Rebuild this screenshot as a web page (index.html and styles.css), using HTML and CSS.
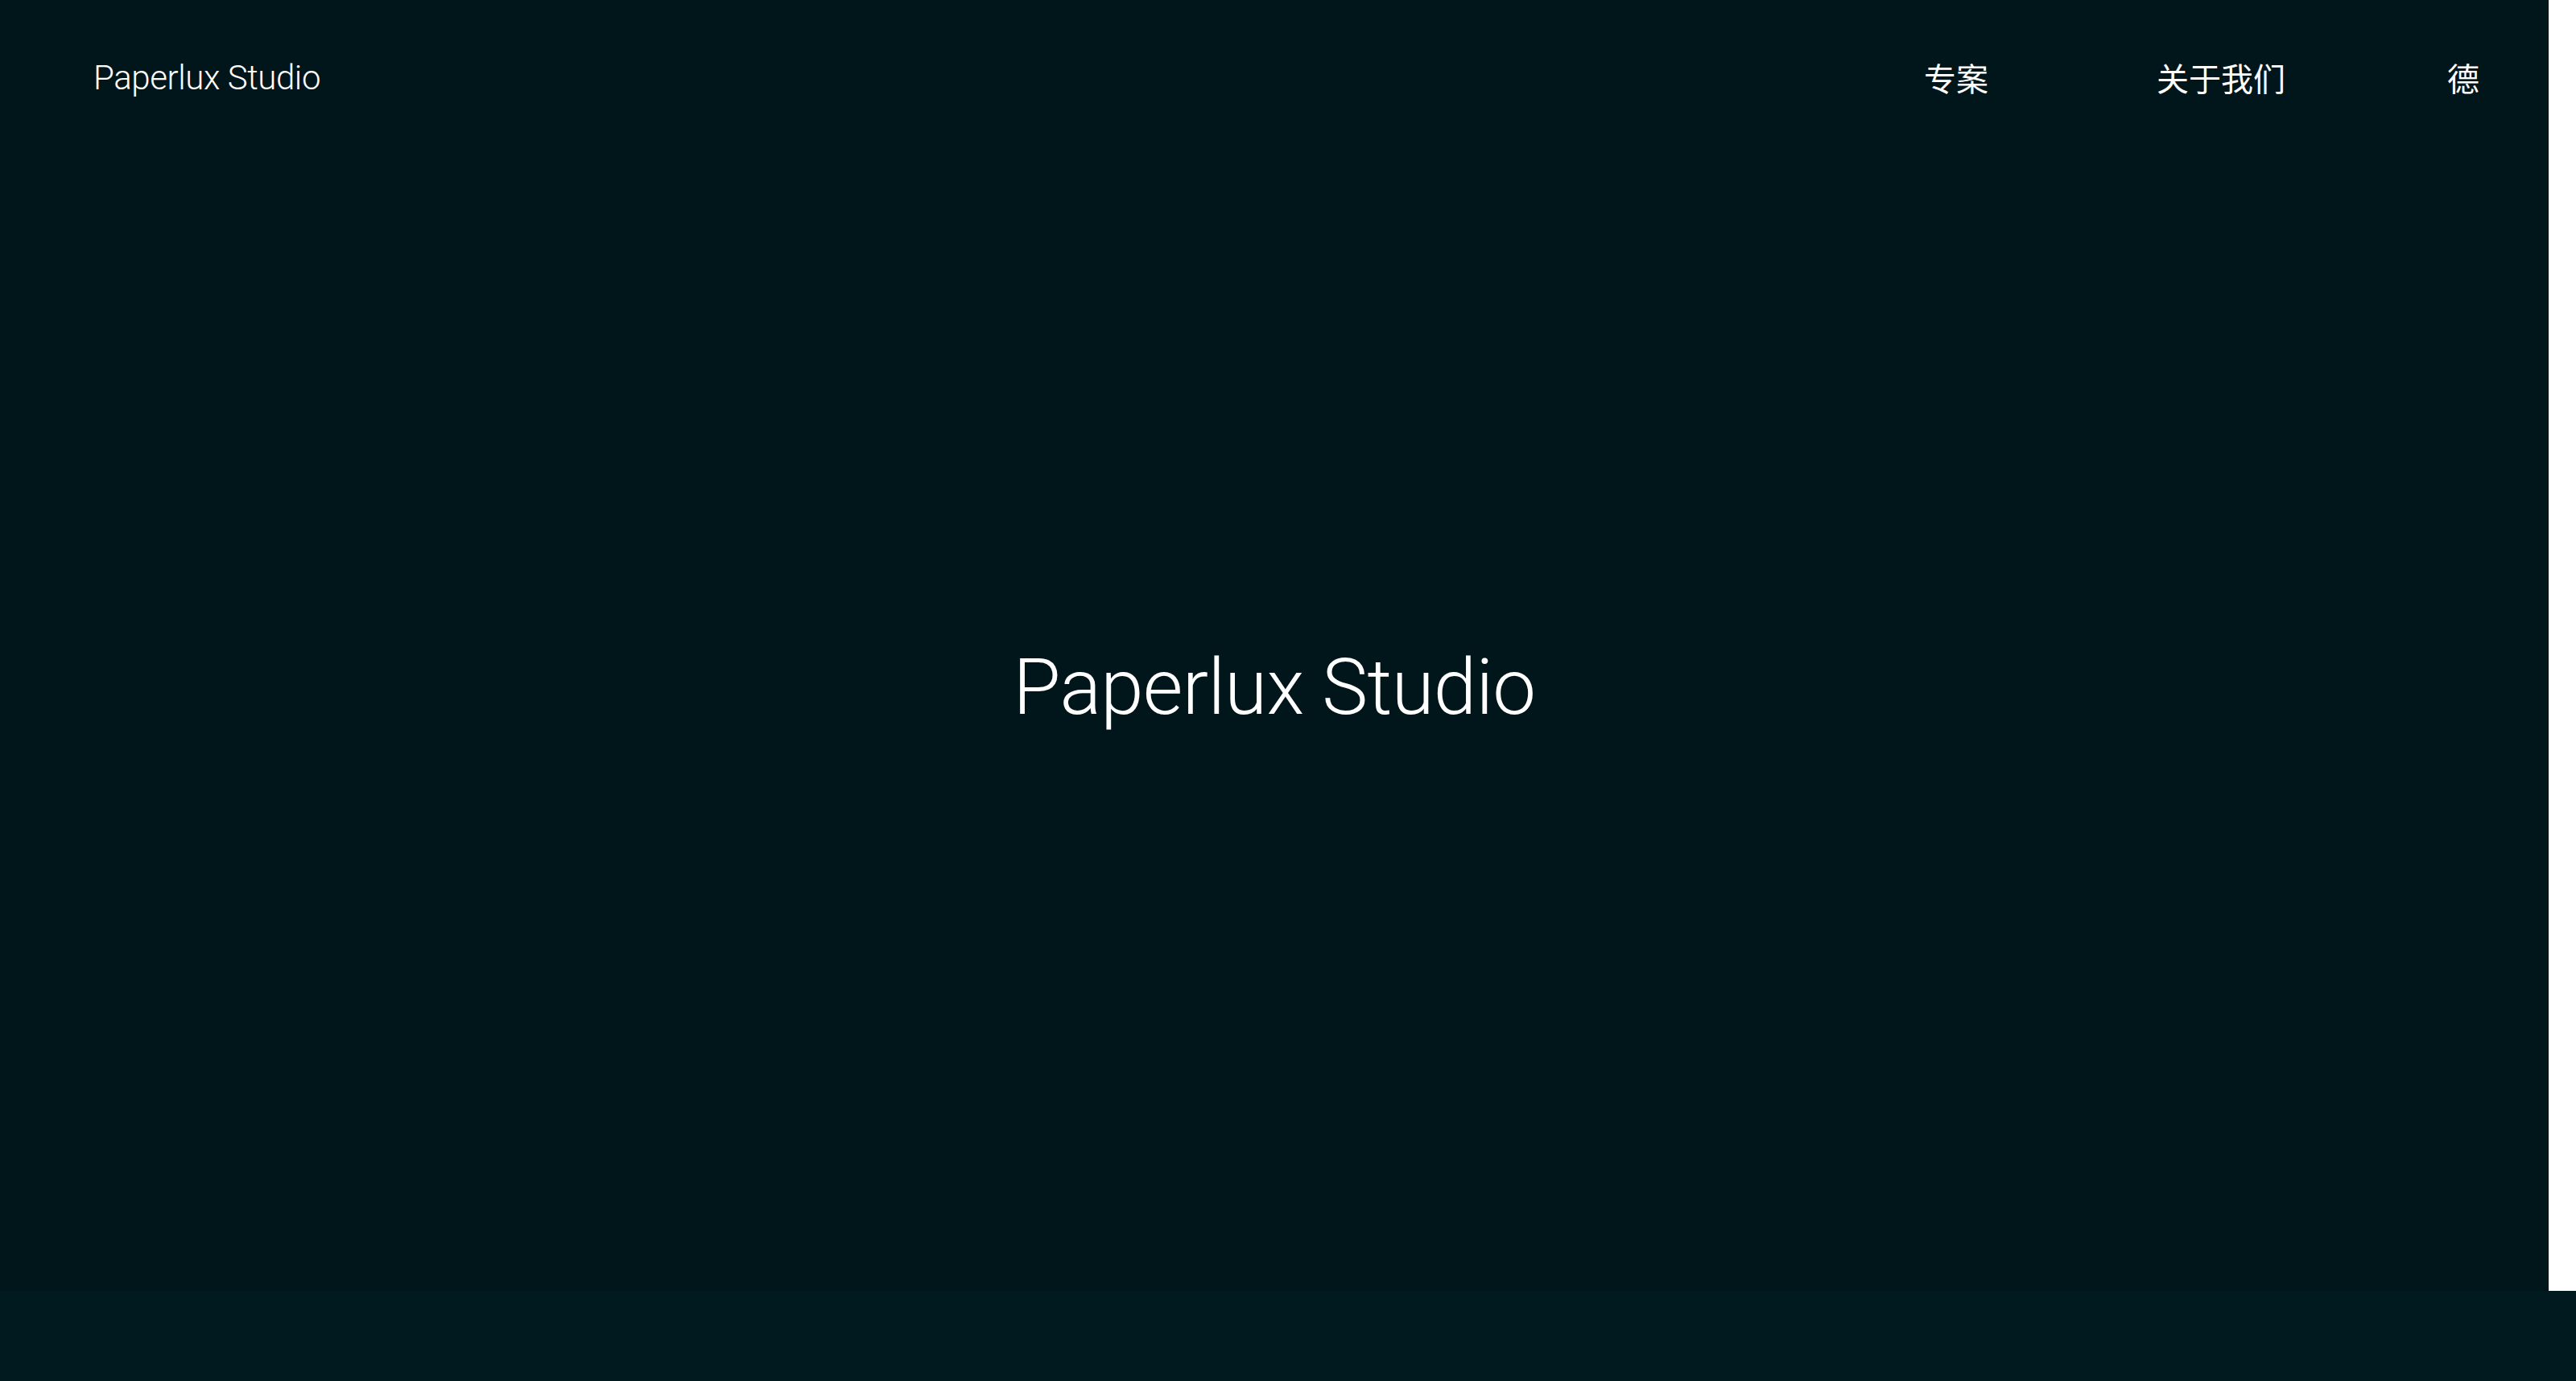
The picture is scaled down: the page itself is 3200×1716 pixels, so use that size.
FILE: index.html
```html
<!DOCTYPE html>
<html lang="zh">
<head>
<meta charset="utf-8">
<title>Paperlux Studio</title>
<link rel="stylesheet" href="styles.css">
</head>
<body>
<div class="page">
  <section class="hero">
    <header class="header">
      <a class="logo" href="#">Paperlux Studio</a>
      <nav class="nav">
        <a class="nav-item nav-item-first" href="#">专案</a>
        <a class="nav-item" href="#">关于我们</a>
        <a class="nav-item" href="#">德</a>
      </nav>
    </header>
    <main class="stage">
      <h1 class="title">Paperlux Studio</h1>
    </main>
  </section>
  <aside class="side"></aside>
</div>
<div class="band"></div>
</body>
</html>
```

FILE: styles.css
```css
html, body {
  margin: 0;
  padding: 0;
}
body {
  background: #001a1f;
  font-family: Roboto, "Noto Sans CJK SC", sans-serif;
  color: #ffffff;
}
a {
  color: inherit;
  text-decoration: none;
}
.page {
  display: flex;
  height: 1604px;
}
.hero {
  width: 3166px;
  flex: none;
  background: #01161b;
  display: flex;
  flex-direction: column;
}
.side {
  flex: 1;
  background: #ffffff;
}
.header {
  display: flex;
  justify-content: space-between;
  align-items: center;
  padding: 72px 86px 0 116px;
  height: 50px;
}
.logo {
  font-size: 42px;
  font-weight: 300;
  line-height: 50px;
  letter-spacing: -0.01em;
}
.nav {
  display: flex;
  gap: 201px;
  margin-top: -3px;
}
.nav-item {
  font-family: "Noto Sans CJK SC", sans-serif;
  font-size: 40px;
  line-height: 50px;
}
.nav-item-first {
  margin-right: 8px;
}
.stage {
  flex: 1;
  display: flex;
  align-items: center;
  justify-content: center;
  padding-bottom: 18px;
}
.title {
  margin: 0;
  font-weight: 300;
  font-size: 96px;
  line-height: 96px;
  letter-spacing: -0.007em;
}
.band {
  height: 112px;
  background: #001a1f;
}
```
